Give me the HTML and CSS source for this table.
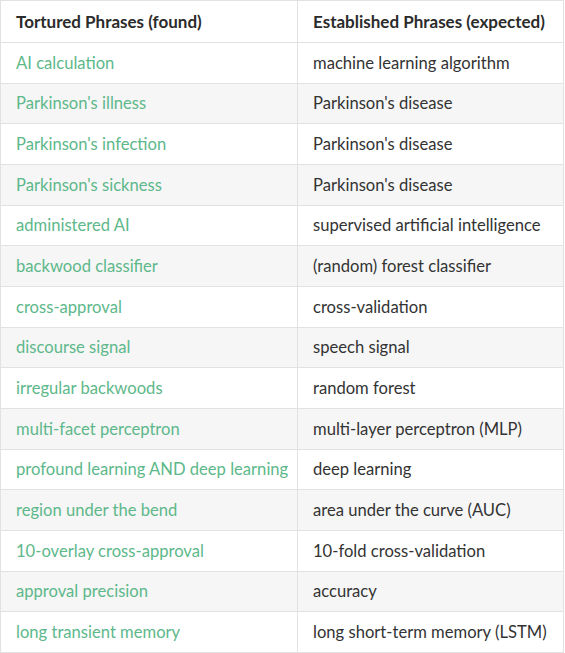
FILE: index.html
```html
<!DOCTYPE html>
<html>
<head>
<meta charset="utf-8">
<link rel="stylesheet" href="styles.css">
</head>
<body>
<table class="phrases">
  <thead>
    <tr><th>Tortured Phrases (found)</th><th>Established Phrases (expected)</th></tr>
  </thead>
  <tbody>
    <tr><td class="found">AI calculation</td><td>machine learning algorithm</td></tr>
    <tr><td class="found">Parkinson's illness</td><td>Parkinson's disease</td></tr>
    <tr><td class="found">Parkinson's infection</td><td>Parkinson's disease</td></tr>
    <tr><td class="found">Parkinson's sickness</td><td>Parkinson's disease</td></tr>
    <tr><td class="found">administered AI</td><td>supervised artificial intelligence</td></tr>
    <tr><td class="found">backwood classifier</td><td>(random) forest classifier</td></tr>
    <tr><td class="found">cross-approval</td><td>cross-validation</td></tr>
    <tr><td class="found">discourse signal</td><td>speech signal</td></tr>
    <tr><td class="found">irregular backwoods</td><td>random forest</td></tr>
    <tr><td class="found">multi-facet perceptron</td><td>multi-layer perceptron (MLP)</td></tr>
    <tr><td class="found">profound learning AND deep learning</td><td>deep learning</td></tr>
    <tr><td class="found">region under the bend</td><td>area under the curve (AUC)</td></tr>
    <tr><td class="found">10-overlay cross-approval</td><td>10-fold cross-validation</td></tr>
    <tr><td class="found">approval precision</td><td>accuracy</td></tr>
    <tr><td class="found">long transient memory</td><td>long short-term memory (LSTM)</td></tr>
  </tbody>
</table>
</body>
</html>
```
FILE: styles.css
```css
html, body { margin: 0; padding: 0; background: #fff; }
body { font-family: Lato, "Liberation Sans", sans-serif; font-size: 16.6px; color: #333; }
.phrases { border-collapse: collapse; width: 564px; table-layout: fixed; }
.phrases th, .phrases td {
  border: 1px solid #e2e2e2;
  height: 40.67px;
  padding: 0 0 0 15px;
  text-align: left;
  box-sizing: border-box;
  white-space: nowrap;
}
.phrases th:first-child, .phrases td:first-child { width: 297px; }
.phrases th { font-weight: 700; color: #2b2b2b; height: 42px; font-size: 17px; }
.phrases tbody tr:nth-child(even) { background: #f6f6f6; }
.phrases .found { color: #5db88a; }
```
